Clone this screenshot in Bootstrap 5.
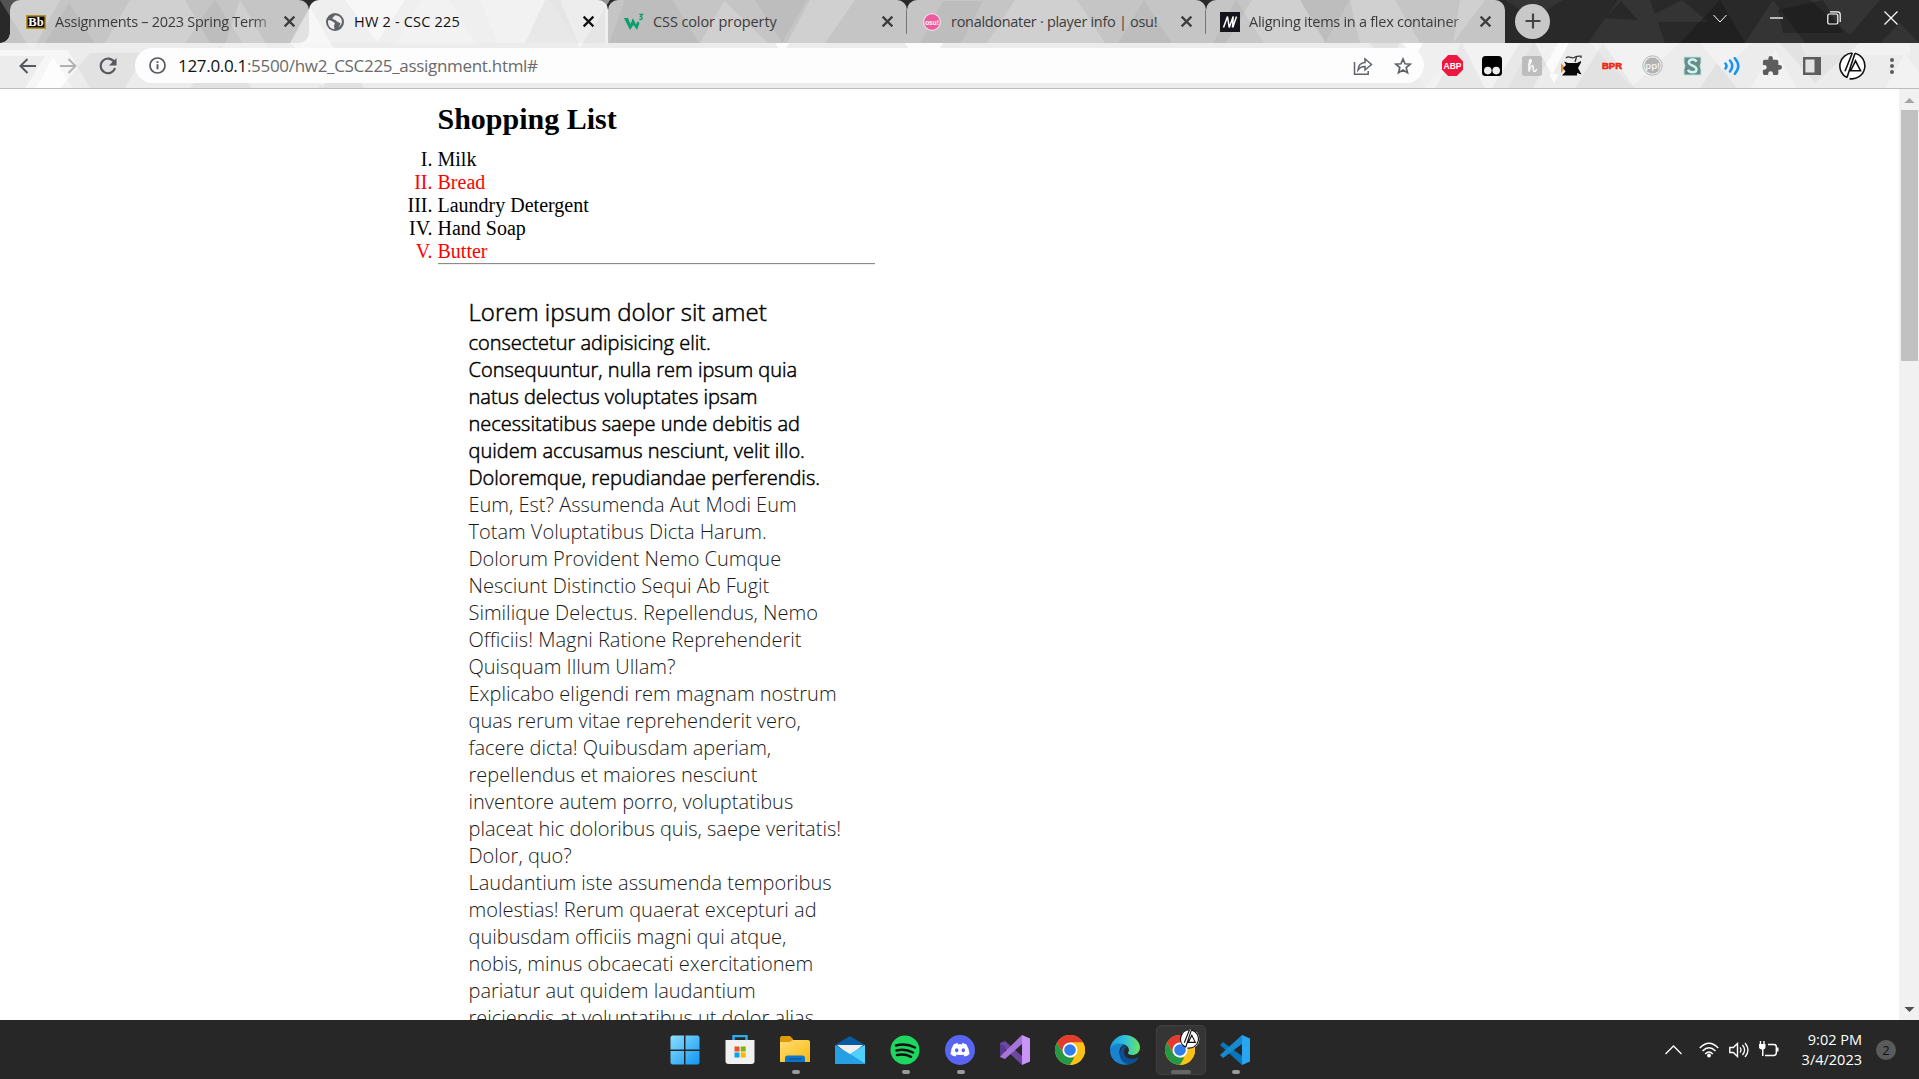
<!DOCTYPE html>
<html lang="en">
<head>
<meta charset="utf-8">
<title>HW 2 - CSC 225</title>
<link rel="stylesheet" href="https://cdn.jsdelivr.net/npm/bootstrap@5.3.0/dist/css/bootstrap.min.css">
<style>
body{height:1079px;overflow:hidden;background:#fff;color:#000;font-family:"Open Sans","Noto Sans",sans-serif}
svg{display:block;flex:none}
.chrome-head{height:89px;background:#ececec;border-bottom:1px solid #bcbcbc;flex:none}
.strip{height:43px;background:#292929;padding-left:10px}
.facets{left:0;top:0;z-index:1}
.above{position:relative;z-index:2}
.tab{width:299px;height:43px;background:#c5c5c5;border-radius:10px 10px 0 0;position:relative;flex:none;color:#3c3c3c;padding:0 9px 0 16px}
.tab:first-child::before,.tab:last-of-type::after{content:"";position:absolute;bottom:0;width:10px;height:10px}
.tab:first-child::before{left:-10px;background:radial-gradient(circle at 0 0,transparent 9.5px,#c5c5c5 10px)}
.tab:last-of-type::after{right:-10px;background:radial-gradient(circle at 100% 0,transparent 9.5px,#c5c5c5 10px)}
.tab.current{background:#efefef;color:#111;padding-left:17px}
.tab.current::before,.tab.current::after{content:"";position:absolute;bottom:0;width:10px;height:10px}
.tab.current::before{left:-10px;background:radial-gradient(circle at 0 0,transparent 9.5px,#efefef 10px)}
.tab.current::after{right:-10px;background:radial-gradient(circle at 100% 0,transparent 9.5px,#efefef 10px)}
.tab .divider{position:absolute;left:-1px;top:10px;width:1px;height:24px;background:#777}
.tab-name{font-size:14.5px;line-height:22px;white-space:nowrap;flex:1 1 0;margin-left:9px;margin-right:9px}
.tab-name.fade-end{-webkit-mask-image:linear-gradient(90deg,#000 90%,rgba(0,0,0,.25))}
.plus{width:35px;height:35px;border-radius:50%;background:#c8c8c8;margin:0 0 1px 10px}
.winbtn{width:57px;height:36px;color:#fff}
.bar{height:45px}
.cell{width:40px;flex:none}
.omni{width:1289px;height:35px;margin-left:7px;background:#fdfdfd;border-radius:18px;padding:0 10px 0 14px}
.addr{font-size:17px;line-height:24px;color:#6a6a6a;white-space:nowrap;margin-left:12px;letter-spacing:-.31px}
.addr b{font-weight:400;color:#111}
.pageview{height:931px;overflow:hidden}
.doc{width:437px;margin-left:437.500px;font-family:"Liberation Serif",serif;font-size:20px;line-height:23px}
.doc h2{font-size:30px;font-weight:700;line-height:34px;margin:0;padding-top:13px}
.roman{list-style:upper-roman;margin:12px 0 0;padding:0}
.red{color:#f00}
.line-rule{height:2px;border-top:1px solid #8b8b8b;border-bottom:1px solid #eee}
.story{font-family:"Open Sans",sans-serif;font-weight:300;font-size:20px;line-height:27px;padding:30px 0 0 31px;white-space:nowrap;color:#1a1a1a}
.story .strong{color:#000;-webkit-text-stroke:.5px #000}
.story .first{font-size:24px;line-height:34px;-webkit-text-stroke:.5px #000}
.story span{display:block;width:max-content}
.scroller{width:20px;background:#f1f1f1;flex:none}
.thumb{width:17px;height:251px;background:#c1c1c1}
.task{height:59px;background:#272727;color:#fff;flex:none}
.app{width:55px;height:59px;position:relative}
.app.run::after{content:"";position:absolute;left:24px;top:50px;width:8px;height:4px;border-radius:2px;background:#9a9a9a}
.app.live::before{content:"";position:absolute;left:3px;top:5px;width:50px;height:50px;border-radius:5px;background:#353535;border:1px solid #404040}
.app.live::after{left:18px;width:20px;background:#666}
.app svg{position:relative}
.clock{font-size:14.5px;line-height:20px;width:86px}
.note{width:20px;height:20px;border-radius:50%;background:#5b5b5b;color:#111;font-size:13px;line-height:20px}
</style>
<script src="https://cdn.jsdelivr.net/npm/bootstrap@5.3.0/dist/js/bootstrap.bundle.min.js"></script>
</head>
<body class="d-flex flex-column m-0">
<svg width="0" height="0" class="position-absolute"><defs>
<symbol id="close" viewBox="0 0 12 12"><path d="M1.5 1.5l9 9M10.500 1.500l-9 9" stroke="currentColor" stroke-width="2"/></symbol>
<symbol id="gc" viewBox="0 0 30 30"><circle cx="15" cy="15" r="15" fill="#fbc116"/><path d="M15 15L8.500 18.700 2 7.500A15 15 0 0 1 28 7.500H15z" fill="#e33b2e"/><path d="M2 7.500L8.500 18.700 15 22.500h6L14.500 30A15 15 0 0 1 2 7.500z" fill="#249845"/><path d="M21.500 18.700L15 30A15 15 0 0 0 28 7.500H15z" fill="#fbc116"/><circle cx="15" cy="15" r="7.500" fill="#fff"/><circle cx="15" cy="15" r="5.800" fill="#2f7de9"/></symbol>
<symbol id="lp" viewBox="0 0 28 28"><circle cx="14" cy="14" r="13.200" fill="#fff"/><path d="M16 1.200A13 13 0 0 1 10.500 26.600M8 25.600A13 13 0 0 1 13.300 1M13.300 1L6 19.300M16 1.200L8 25.600M10.300 18.700h11.200L16.500 8.800 11.800 18.500" fill="none" stroke="#111" stroke-width="1.600"/></symbol>
</defs></svg>

<header class="chrome-head position-relative">
  <svg class="facets position-absolute" width="1919" height="88">
    <g fill="#fff">
      <path opacity=".5" d="M90 88l-22-38H0v6h45l-20 32zM290 43l20-36 32 56-20 25-10-25zM345 0h60l-28 42zM560 0h50l-30 48z"/>
      <path opacity=".2" d="M0 0h60l-28 52zM240 0l38 64h-60zM130 0h55l25 43h-105zM395 45l40-68 42 68zM480 0h70l28 43h-80zM700 43l24-42 44 42zM810 0h45l-30 43h-38zM1015 0h62l28 43h-118zM1252 0h48l26 43h-100zM1350 0h45l25 43h-60zM1460 0h25l-32 43zM1400 43h62l-36 45z"/>
      <path opacity=".8" d="M775 43h14l-6 12zM905 43h38l-18 30zM1403 43h20l-10 18zM1535 43h34l-17 32zM1549 74h10l-5 9zM36 88l17-31 20 31z"/>
      <path opacity=".3" d="M1425 88l38-45h70l-25 45zM1590 43h90l-48 44zM1700 43l22 27 30-27zM1750 88l25-38 22 38zM1800 43h110v12h-105zM1885 88l20-35 14 20v15z"/>
    </g>
    <g fill="#000" opacity=".04"><path d="M45 43l24-40 25 40zM185 43l30-43 28 43zM60 88l30-35h55l-20 35zM190 88l30-42 32 42zM318 88l28-38 18 38zM545 0h60v43h-80zM625 0h48l26 43h-90zM755 0h52l-25 43zM920 43l23-42h40l-22 42zM1118 43l26-43 28 43zM1213 43l23-43 28 43zM1300 0h50l-25 43zM1435 88l27-45 23 45zM1492 88l28-45h38l-25 45zM1575 88l28-45 32 45zM1700 88l17-25 20 25zM1780 43h80l-45 40zM1370 43h30l-14 25z"/></g>
    <g fill="#fff" opacity=".055"><path d="M1505 0h58l-30 18zM1588 43l30-43h32l15 43zM1655 14l27-14 26 22h-92zM1745 43l28-43 32 43zM1810 0h70l-30 35zM1880 43l20-20 19 20z"/></g>
    <g fill="#000" opacity=".22"><path d="M1605 18l16-17 17 19zM1680 43l40-43 25 43zM1778 10l45-10 20 33h-60z"/></g>
  </svg>
  <div class="strip d-flex align-items-center">
    <div class="tab d-flex align-items-center">
      <svg class="above" width="20" height="14"><rect x=".8" y=".8" width="18.400" height="12.400" fill="#090909" stroke="#b99022" stroke-width="1.600"/><text x="10" y="11.300" font-family="Liberation Serif" font-weight="700" font-size="12.500" fill="#fff" text-anchor="middle">Bb</text></svg>
      <span class="tab-name fade-end above" style="letter-spacing:-.28px">Assignments – 2023 Spring Term</span>
      <svg class="above me-1" width="13" height="13"><use href="#close"/></svg>
    </div>
    <div class="tab current d-flex align-items-center">
      <svg class="above" width="18" height="18" viewBox="0 0 18 18"><circle cx="9" cy="9" r="9" fill="#5f6368"/><path d="M2 7.500c3-1 4 .5 5.500 1.500s2 2 .5 3l.5 4.200C4.500 16 1.500 12.500 2 7.500zM9 2.200c-1 2-3.500 2-2 3.800 1.200 1.200 2.500.5 3.500 2 .8 1.300 3 1 4 2.500-.4 1.500-1.200 3-2.500 4 4-2 5-6.500 2.700-9.500-1.400-2-3.600-2.900-5.700-2.800z" fill="#eee"/></svg>
      <span class="tab-name above" style="letter-spacing:.2px;margin-left:10px">HW 2 - CSC 225</span>
      <svg class="above me-1" width="13" height="13"><use href="#close"/></svg>
    </div>
    <div class="tab d-flex align-items-center">
      <svg class="above" width="20" height="18" viewBox="0 0 20 18"><path d="M0 5h4l2.500 6 2.500-6 3 6.500L13.500 8l2 2L13 17 9.500 12 6 17z" fill="#0aa06e"/><path d="M15.300 1.300h3.200l-2 2.300c2.500 0 2.500 3.400-1.200 2.900" fill="none" stroke="#0aa06e" stroke-width="1.300"/></svg>
      <span class="tab-name above" style="letter-spacing:-.1px">CSS color property</span>
      <svg class="above me-1" width="13" height="13"><use href="#close"/></svg>
    </div>
    <div class="tab d-flex align-items-center"><i class="divider"></i>
      <svg class="above" width="18" height="18"><circle cx="9" cy="9" r="8.400" fill="#ea5c9e" stroke="#f3dbe7" stroke-width="1.200"/><text x="9" y="11.500" font-family="Liberation Sans" font-weight="700" font-size="6.500" fill="#fff" text-anchor="middle">osu!</text></svg>
      <span class="tab-name above" style="letter-spacing:-.3px;margin-left:10px">ronaldonater · player info | osu!</span>
      <svg class="above me-1" width="13" height="13"><use href="#close"/></svg>
    </div>
    <div class="tab d-flex align-items-center" style="padding-left:14px"><i class="divider"></i>
      <svg class="above" width="20" height="20"><path d="M0 0h20v20H0z" fill="#15141a"/><path d="M3.500 15.500l4-11 1.700 11 4-11-.7 11M12.800 15.500l3.700-11" stroke="#fff" stroke-width="1.500" fill="none"/></svg>
      <span class="tab-name fade-end above" style="letter-spacing:-.27px">Aligning items in a flex container</span>
      <svg class="above me-1" width="13" height="13"><use href="#close"/></svg>
    </div>
    <span class="plus above d-flex align-items-center justify-content-center"><svg width="16" height="16"><path d="M8 .5v15M.5 8h15" stroke="#444" stroke-width="2.200"/></svg></span>
    <div class="above d-flex ms-auto align-self-start">
      <span class="winbtn d-flex align-items-center justify-content-center"><svg width="14" height="9"><path d="M.5 1L7 8l6.500-7" fill="none" stroke="currentColor"/></svg></span>
      <span class="winbtn d-flex align-items-center justify-content-center"><svg width="13" height="2"><path d="M0 1h13" stroke="currentColor" stroke-width="1.300"/></svg></span>
      <span class="winbtn d-flex align-items-center justify-content-center"><svg width="14" height="14"><rect x=".8" y="3" width="10" height="10" rx="1.500" fill="none" stroke="currentColor" stroke-width="1.200"/><path d="M3 .8h7.500a2.700 2.700 0 0 1 2.700 2.700V11" fill="none" stroke="currentColor" stroke-width="1.200"/></svg></span>
      <span class="winbtn d-flex align-items-center justify-content-center"><svg width="14" height="14"><path d="M.5.5l13 13M13.500.5l-13 13" stroke="currentColor" stroke-width="1.200"/></svg></span>
    </div>
  </div>
  <div class="bar above d-flex align-items-center">
    <span class="cell d-flex justify-content-center ms-2"><svg width="18" height="16"><path d="M17 8H2M8.500 1L1.500 8l7 7" fill="none" stroke="#55585c" stroke-width="2"/></svg></span>
    <span class="cell d-flex justify-content-center"><svg width="18" height="16"><path d="M1 8h15M9.500 1l7 7-7 7" fill="none" stroke="#b2b2b2" stroke-width="2"/></svg></span>
    <span class="cell d-flex justify-content-center"><svg width="18" height="18"><path d="M15.200 5A7.300 7.300 0 1 0 16 11" fill="none" stroke="#55585c" stroke-width="2.100"/><path d="M17.500 1v7.500H10z" fill="#55585c"/></svg></span>
    <div class="omni d-flex align-items-center">
      <svg width="17" height="17"><circle cx="8.500" cy="8.500" r="7.500" fill="none" stroke="#55585c" stroke-width="1.700"/><path d="M8.500 7.300v5M8.500 4.200v1.900" stroke="#55585c" stroke-width="1.900"/></svg>
      <span class="addr"><b>127.0.0.1</b>:5500/hw2_CSC225_assignment.html#</span>
      <span class="cell d-flex justify-content-center ms-auto"><svg width="20" height="18"><path d="M1.500 5v12.200h13.700v-3.200M5 13c.3-4.500 2.500-7.300 7-7.500V1.800L18.500 7.500 12 13V9.500C9 9.400 6.800 10.500 5 13z" fill="none" stroke="#5f6368" stroke-width="1.500"/></svg></span>
      <span class="cell d-flex justify-content-center" style="margin-right:-9px"><svg width="18" height="18"><path d="M9 2l2 4.800 5.200.4-4 3.400 1.300 5.100L9 13l-4.500 2.700 1.300-5.100-4-3.400 5.200-.4z" fill="none" stroke="#5f6368" stroke-width="1.700"/></svg></span>
    </div>
    <div class="d-flex align-items-center ms-2">
      <span class="cell d-flex justify-content-center"><svg width="21" height="21"><path d="M6.200 0h8.600L21 6.200v8.600L14.800 21H6.200L0 14.800V6.200z" fill="#ee1740"/><text x="10.500" y="14" font-family="Liberation Sans" font-weight="700" font-size="9.500" fill="#fff" text-anchor="middle" textLength="18" lengthAdjust="spacingAndGlyphs">ABP</text></svg></span>
      <span class="cell d-flex justify-content-center"><svg width="20" height="20"><rect width="20" height="20" rx="3.500"/><circle cx="5.800" cy="14.600" r="3.800" fill="#eee"/><circle cx="14.200" cy="14.600" r="3.800" fill="#eee"/></svg></span>
      <span class="cell d-flex justify-content-center"><svg width="20" height="20"><rect width="20" height="20" rx="2.500" fill="#bdbdbd"/><path d="M6 9c3-1 4-5 2.500-5.300C7 3.500 7 9 7 15.500c1-4 2-6 3.500-6s0 6 1.700 6 2-1 2.600-2.500" fill="none" stroke="#f5f5f5" stroke-width="1.700"/></svg></span>
      <span class="cell d-flex justify-content-center"><svg width="22" height="22"><path d="M0 8l4 5-4 5z" fill="#ef8f22"/><path d="M3 6.500l4 1.500h9l4-2v1.500L17 13l3.500 6.500L16 18v2.500H1l3.500-4L2 13l3-3z" fill="#090909"/><path d="M5 3c3-3 5 1 8-.5S17 1 20 1.200V3M14 7l1.500-5" fill="none" stroke="#333" stroke-width="1.300"/></svg></span>
      <span class="cell d-flex justify-content-center"><svg width="22" height="10"><text x="11" y="8" text-anchor="middle" textLength="20" lengthAdjust="spacingAndGlyphs" font-family="Liberation Sans" font-weight="700" font-size="9" fill="#ef2814" stroke="#ef2814" stroke-width=".6">BPR</text></svg></span>
      <span class="cell d-flex justify-content-center"><svg width="21" height="21"><circle cx="10.500" cy="10.500" r="9.700" fill="none" stroke="#b4b4b4"/><circle cx="10.500" cy="10.500" r="8" fill="#b2b2b2"/><text x="10.500" y="13.500" text-anchor="middle" font-family="Open Sans" font-weight="600" font-size="9.500" fill="#f4f4f4">pp!</text></svg></span>
      <span class="cell d-flex justify-content-center"><svg width="19" height="20"><path d="M1 1h17v6l-1 3 1 3v6H1v-6l1-3-1-3z" fill="#6f8b87" stroke="#b6e9e3"/><path d="M13.500 5.800C12 2.500 5.500 3 5.800 6.500c.3 3.300 7.700 3 7.700 6.700 0 4-7 4-8.500.6" fill="none" stroke="#c9f8f2" stroke-width="2.500"/></svg></span>
      <span class="cell d-flex justify-content-center"><svg width="17" height="18"><path d="M1.500 6.500q2 2.500 0 5M6 3.500q4.500 5.500 0 11M10.800 1.200q7 8 0 15.600" fill="none" stroke="#1592f8" stroke-width="2.500" stroke-linecap="round"/></svg></span>
      <span class="cell d-flex justify-content-center"><svg width="20" height="20" viewBox="1 1 22 22"><path fill="#5d5d5d" d="M20.500 11H19V7c0-1.100-.9-2-2-2h-4V3.500a2.500 2.500 0 0 0-5 0V5H4c-1.100 0-2 .9-2 2v3.800h1.500a2.700 2.700 0 0 1 0 5.400H2V20c0 1.100.9 2 2 2h3.800v-1.500a2.700 2.700 0 0 1 5.400 0V22H17c1.100 0 2-.9 2-2v-4h1.500a2.500 2.500 0 0 0 0-5z"/></svg></span>
      <span class="cell d-flex justify-content-center"><svg width="18" height="18"><path d="M1.200 1.200h15.600v15.600H1.200z" fill="none" stroke="#5d5d5d" stroke-width="2.400"/><path d="M11.500 1H17v16h-5.500z" fill="#5d5d5d"/></svg></span>
      <span class="cell d-flex justify-content-end" style="padding-right:5px"><svg width="28" height="28"><use href="#lp"/></svg></span>
      <span class="cell d-flex justify-content-center"><svg width="6" height="18" fill="#5d5d5d"><circle cx="3" cy="3" r="2"/><circle cx="3" cy="9" r="2"/><circle cx="3" cy="15" r="2"/></svg></span>
    </div>
  </div>
</header>

<main class="pageview d-flex">
  <div class="flex-grow-1">
    <div class="doc">
      <h2>Shopping List</h2>
      <ol class="roman">
        <li>Milk</li><li class="red">Bread</li><li>Laundry Detergent</li><li>Hand Soap</li><li class="red">Butter</li>
      </ol>
      <div class="line-rule"></div>
      <div class="story">
        <span class="strong first">Lorem ipsum dolor sit amet</span>
        <div class="strong"><span>consectetur adipisicing elit.</span><span>Consequuntur, nulla rem ipsum quia</span><span>natus delectus voluptates ipsam</span><span>necessitatibus saepe unde debitis ad</span><span>quidem accusamus nesciunt, velit illo.</span><span>Doloremque, repudiandae perferendis.</span></div>
        <div class="text-capitalize"><span>Eum, est? Assumenda aut modi eum</span><span>totam voluptatibus dicta harum.</span><span>Dolorum provident nemo cumque</span><span>nesciunt distinctio sequi ab fugit</span><span>similique delectus. Repellendus, nemo</span><span>officiis! Magni ratione reprehenderit</span><span>quisquam illum ullam?</span></div>
        <div><span>Explicabo eligendi rem magnam nostrum</span><span>quas rerum vitae reprehenderit vero,</span><span>facere dicta! Quibusdam aperiam,</span><span>repellendus et maiores nesciunt</span><span>inventore autem porro, voluptatibus</span><span>placeat hic doloribus quis, saepe veritatis!</span><span>Dolor, quo?</span></div>
        <div><span>Laudantium iste assumenda temporibus</span><span>molestias! Rerum quaerat excepturi ad</span><span>quibusdam officiis magni qui atque,</span><span>nobis, minus obcaecati exercitationem</span><span>pariatur aut quidem laudantium</span><span>reiciendis at voluptatibus ut dolor alias</span></div>
      </div>
    </div>
  </div>
  <div class="scroller d-flex flex-column align-items-center justify-content-between">
    <div class="d-flex flex-column align-items-center"><svg width="20" height="21"><path d="M5.500 14h10l-5-5z" fill="#a3a3a3"/></svg><div class="thumb"></div></div>
    <svg width="20" height="21"><path d="M5.500 8h10l-5 5z" fill="#505050"/></svg>
  </div>
</main>

<footer class="task d-flex align-items-center">
  <div class="d-flex" style="margin-left:657.500px">
    <span class="app d-flex align-items-center justify-content-center"><svg width="30" height="30" viewBox="0 0 30 30"><defs><linearGradient id="wg" x2="1" y2="1"><stop stop-color="#8ce0fd"/><stop offset="1" stop-color="#0f95f5"/></linearGradient></defs><path d="M2 .5h12v14H.5V2zM15.500.5H28L29.500 2v12.500h-14zM.5 16H14v13.500H2L.5 28zM15.500 16h14v12L28 29.500H15.500z" fill="url(#wg)"/></svg></span>
    <span class="app d-flex align-items-center justify-content-center"><svg width="30" height="30" viewBox="0 0 30 30"><path d="M8.500 6V1h13v5" fill="none" stroke="#2aaced" stroke-width="2.400"/><path d="M.5 5h29v21q0 3-3 3h-23q-3 0-3-3z" fill="#f1f1f1"/><path d="M9.500 11.500h5v5h-5z" fill="#ef5125"/><path d="M15.700 11.500h5v5h-5z" fill="#7db700"/><path d="M9.500 17.500h5v5h-5z" fill="#08a2ed"/><path d="M15.700 17.500h5v5h-5z" fill="#fcb700"/></svg></span>
    <span class="app run d-flex align-items-center justify-content-center"><svg width="30" height="28" viewBox="0 0 30 28"><path d="M0 2q0-2 2-2h8l3 3v5H0z" fill="#dc9b0a"/><defs><linearGradient id="fg" x2="1" y2="1"><stop stop-color="#ffdf74"/><stop offset="1" stop-color="#f9b911"/></linearGradient></defs><path d="M0 6h10l3-2h15q2 0 2 2v20H0z" fill="url(#fg)"/><path d="M5 26v-4q0-2.500 2.500-2.500h15q2.500 0 2.500 2.500v4z" fill="#0c77ca"/><path d="M8.500 23h13" stroke="#084f8b"/></svg></span>
    <span class="app d-flex align-items-center justify-content-center"><svg width="30" height="30" viewBox="0 0 30 30"><path d="M0 10L15 1l15 9v3H0z" fill="#095ba1"/><path d="M2 10h26L15 21z" fill="#efefef"/><path d="M0 10l15 9 15-9v19H0z" fill="#279fe4"/><path d="M15 19l15-9v18.500z" fill="#4ed2fb"/><path d="M4 11h22l-11 7.800z" fill="#f0f0f0"/></svg></span>
    <span class="app run d-flex align-items-center justify-content-center"><svg width="30" height="30" viewBox="0 0 30 30"><circle cx="15" cy="15" r="14.500" fill="#1fd660"/><path d="M6 10.500q10-2.500 19 2M6.500 15.500q9-2 16.500 2M7 20q8-1.500 14 1.800" fill="none" stroke="#111" stroke-width="2.500" stroke-linecap="round"/></svg></span>
    <span class="app run d-flex align-items-center justify-content-center"><svg width="30" height="30" viewBox="0 0 30 30"><circle cx="15" cy="15" r="15" fill="#5865f2"/><path d="M8.500 9.500Q11 8 12.500 8l.7 1.200h3.600l.7-1.200q1.500 0 4 1.500 2.500 4 3 9.500-2 2-5 2.500l-1.200-2q-3.300 1-6.600 0l-1.200 2q-3-.5-5-2.500.5-5.500 3-9.500z" fill="#fff"/><ellipse cx="11.700" cy="15.300" rx="1.700" ry="2" fill="#5865f2"/><ellipse cx="18.300" cy="15.300" rx="1.700" ry="2" fill="#5865f2"/></svg></span>
    <span class="app d-flex align-items-center justify-content-center"><svg width="30" height="30" viewBox="0 0 30 30"><path d="M0 8l5-2 17 15v9L5 14v3l-5 5z" fill="#6c479f"/><path d="M0 22V8l5 4v6z" fill="#58398e"/><path d="M0 22l5 2L22 9V0L3.500 18z" fill="#a576d8"/><path d="M22 0l8 3.500v23L22 30z" fill="#c994f7"/></svg></span>
    <span class="app d-flex align-items-center justify-content-center"><svg width="30" height="30"><use href="#gc"/></svg></span>
    <span class="app d-flex align-items-center justify-content-center"><svg width="30" height="30" viewBox="0 0 30 30"><defs><linearGradient id="eg"><stop stop-color="#199bdd"/><stop offset=".5" stop-color="#30c1dc"/><stop offset="1" stop-color="#69e45c"/></linearGradient></defs><path d="M0 15C0 7 7 0 15 0s15 6 15 12.500c0 7-8 9-11.500 6.500-1.500-1 .8-2 .4-4.500C18 8 6 6 0 15z" fill="url(#eg)"/><path d="M0 15C2 9 9 7 14 9.800 9 12 8 18 11 22.500S20 29 23 27.500C14 33 0 28 0 15z" fill="#1883cf"/><path d="M14 11c-7 4-5 18 5 18 5 0 9-4 10-7-8 4-15 1-15-5 0-3 1-4 3-5.500z" fill="#0c4f94"/></svg></span>
    <span class="app run live d-flex align-items-center justify-content-center"><svg width="35" height="42" viewBox="0 0 35 42" style="margin-left:5px"><use href="#gc" width="30" height="30" y="6"/><use href="#lp" width="20" height="20" x="15" y="0"/></svg></span>
    <span class="app run d-flex align-items-center justify-content-center"><svg width="30" height="30" viewBox="0 0 30 30"><path d="M0 10l3-3 19 14v9z" fill="#0876bb"/><path d="M0 20l3 3L22 9V0z" fill="#168bd0"/><path d="M22 0l8 3.500v23L22 30z" fill="#27a7f1"/></svg></span>
  </div>
  <div class="d-flex align-items-center ms-auto" style="padding-right:23px">
    <svg width="17" height="10"><path d="M.5 9l8-8 8 8" fill="none" stroke="#fff" stroke-width="1.300"/></svg>
    <svg width="20" height="16" style="margin-left:17px"><path d="M.8 6q9.200-9.500 18.400 0M3.500 9q6.500-6.500 13 0M6.200 12q3.800-3.800 7.600 0" fill="none" stroke="#fff" stroke-width="1.500"/><circle cx="10" cy="13.500" r="1.900" fill="#fff"/></svg>
    <svg width="20" height="16" style="margin-left:10px"><path d="M.8 5.500h3.500L8.500 1.500v13l-4.200-4H.8z" fill="none" stroke="#fff" stroke-width="1.400"/><path d="M11 5.300q2 2.700 0 5.400M13.500 3q4.200 5 0 10M16 1q6 7 0 14" fill="none" stroke="#fff" stroke-width="1.300"/></svg>
    <svg width="20" height="17" style="margin-left:10px"><path d="M1.500 0v3M5 0v3" stroke="#fff" stroke-width="1.400"/><path d="M0 3h6.500v3q0 2-2 2.500V15H3V8.500Q0 8 0 6zM17.500 6.500h2v4h-2z" fill="#fff"/><path d="M9 3.500h6q2.300 0 2.300 2.300v6q0 2.700-2.700 2.700H6" fill="none" stroke="#fff" stroke-width="1.400"/></svg>
    <div class="clock text-end" style="margin-left:-3px"><div>9:02 PM</div><div>3/4/2023</div></div>
    <span class="note text-center" style="margin-left:14px">2</span>
  </div>
</footer>
</body>
</html>
